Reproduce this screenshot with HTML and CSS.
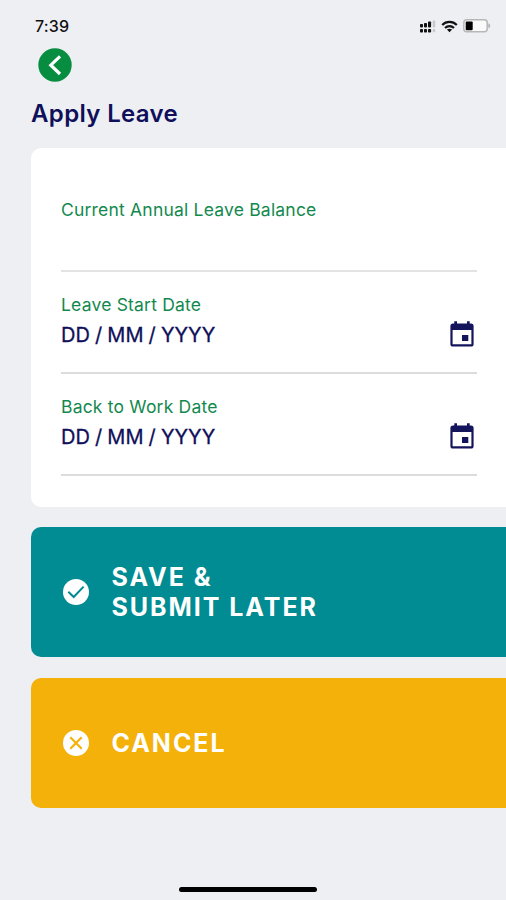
FILE: index.html
```html
<!DOCTYPE html>
<html lang="en">
<head>
  <meta charset="UTF-8" />
  <meta name="viewport" content="width=device-width, initial-scale=1.0"/>
  <title>Apply Leave</title>
  <link rel="stylesheet" href="styles.css">
</head>
<body>

  <div class="status-bar">
    <span class="time">7:39</span>
    <div class="status-icons">
      <svg class="signal" width="16" height="13" viewBox="0 0 16 13">
        <g fill="#111">
          <rect x="0" y="4" width="3" height="3.4" rx=".8"/>
          <rect x="4" y="3" width="3" height="4.4" rx=".8"/>
          <rect x="8" y="1.5" width="3.1" height="5.9" rx=".8"/>
          <rect x="0" y="9" width="3" height="3.5" rx=".8"/>
          <rect x="4" y="9" width="3" height="3.5" rx=".8"/>
          <rect x="8" y="9" width="3.1" height="3.5" rx=".8"/>
        </g>
        <g fill="#c6c7ca">
          <rect x="12.8" y="0.5" width="2.4" height="7" rx=".8"/>
          <rect x="12.8" y="9" width="2.4" height="3.2" rx=".8"/>
        </g>
      </svg>
      <svg class="wifi" width="17" height="13" viewBox="0 0 17 13">
        <g fill="none" stroke="#111" stroke-width="2.1">
          <path d="M1.2 5C5.2 .8 11.8 .8 15.8 5"/>
          <path d="M4 8C6.5 5.5 10.5 5.5 13 8"/>
        </g>
        <path d="M8.5 12.2L5.9 9.6C7.3 8.3 9.7 8.3 11.1 9.6Z" fill="#111"/>
      </svg>
      <svg class="battery" width="28" height="14" viewBox="0 0 28 14">
        <rect x=".8" y=".8" width="23.4" height="12" rx="3" fill="#fafafa" stroke="#b7b7ba" stroke-width="1.5"/>
        <rect x="2.7" y="2.4" width="7" height="8.8" rx="1" fill="#000"/>
        <path d="M25.4 4.3C27.8 5 27.8 8.6 25.4 9.3Z" fill="#b0b0b3"/>
      </svg>
    </div>
  </div>

  <header>
    <a class="back" aria-label="Back">
      <svg width="34" height="34" viewBox="0 0 34 34">
        <circle cx="17" cy="17" r="16.7" fill="#068d40"/>
        <path d="M22 8.4L12.8 17.2L22 26" fill="none" stroke="#fff" stroke-width="3.2"/>
      </svg>
    </a>
    <h1>Apply Leave</h1>
  </header>

  <form class="form-box">
    <div class="field balance">
      <span class="label">Current Annual Leave Balance</span>
    </div>

    <div class="field">
      <div>
        <span class="label">Leave Start Date</span>
        <span class="value">DD / MM / YYYY</span>
      </div>
      <svg class="calendar" width="24" height="26" viewBox="0 0 24 26">
        <path d="M3 2.5H21A2.6 2.6 0 0 1 23.6 5.1V22.9A2.6 2.6 0 0 1 21 25.5H3A2.6 2.6 0 0 1 .4 22.9V5.1A2.6 2.6 0 0 1 3 2.5ZM2.6 9V23.3H21.4V9Z" fill="#14145c" fill-rule="evenodd"/>
        <path d="M4.3 .3H7V4H4.3ZM17 .3H19.7V4H17ZM12 14H18.3V20H12Z" fill="#14145c"/>
      </svg>
    </div>

    <div class="field">
      <div>
        <span class="label">Back to Work Date</span>
        <span class="value">DD / MM / YYYY</span>
      </div>
      <svg class="calendar" width="24" height="26" viewBox="0 0 24 26">
        <path d="M3 2.5H21A2.6 2.6 0 0 1 23.6 5.1V22.9A2.6 2.6 0 0 1 21 25.5H3A2.6 2.6 0 0 1 .4 22.9V5.1A2.6 2.6 0 0 1 3 2.5ZM2.6 9V23.3H21.4V9Z" fill="#14145c" fill-rule="evenodd"/>
        <path d="M4.3 .3H7V4H4.3ZM17 .3H19.7V4H17ZM12 14H18.3V20H12Z" fill="#14145c"/>
      </svg>
    </div>
  </form>

  <button type="button" class="btn save">
    <svg width="26" height="26" viewBox="0 0 26 26">
      <circle cx="13" cy="13" r="13" fill="#fff"/>
      <path d="M5.3 12.8L10.7 18L20.6 7.6" fill="none" stroke="#008c92" stroke-width="2"/>
    </svg>
    <span>SAVE &amp;<br>SUBMIT LATER</span>
  </button>

  <button type="button" class="btn cancel">
    <svg width="26" height="26" viewBox="0 0 26 26">
      <circle cx="13" cy="13" r="13" fill="#fff"/>
      <path d="M7.3 7.3L18.7 18.7M18.7 7.3L7.3 18.7" fill="none" stroke="#f4b10a" stroke-width="2.2"/>
    </svg>
    <span>CANCEL</span>
  </button>

  <div class="home-bar"></div>

</body>
</html>
```
FILE: styles.css
```css
* {
  margin: 0; padding: 0; box-sizing: border-box;
  font-family: 'Inter', sans-serif;
}
body {
  height: 900px;
  padding-left: 30.5px;
  background: #edeff3;
  color: #0f0f5a;
  overflow: hidden;
  display: flex;
  flex-direction: column;
}
.status-bar {
  display: flex;
  justify-content: space-between;
  align-items: center;
  height: 20px;
  margin-top: 16px;
  padding: 0 15px 0 4.5px;
}
.time {
  font-size: 16px;
  font-weight: 500;
  letter-spacing: 0.2px;
  color: #111;
}
.status-icons {
  display: flex;
  align-items: center;
  gap: 6px;
}
.signal {
  margin-right: -1px;
}
.battery {
  margin-left: -1px;
}
.back {
  display: block;
  width: 34px;
  height: 34px;
  margin: 12px 0 0 7px;
}
.back svg {
  display: block;
}
header h1 {
  margin: 17px 0 0 0.5px;
  font-size: 24px;
  line-height: 30px;
  font-weight: 600;
  letter-spacing: 0.35px;
}
.form-box {
  height: 358.5px;
  margin-top: 19px;
  padding: 22px 29px 0 30.5px;
  background: #fff;
  border-radius: 10px 0 0 10px;
}
.field {
  display: flex;
  justify-content: space-between;
  align-items: flex-end;
  height: 102px;
  padding-bottom: 24px;
  border-bottom: 2px solid #dcdcde;
}
.balance {
  align-items: flex-start;
  height: 102px;
  padding-top: 29px;
  border-bottom-color: #e3e3e4;
}
.label {
  display: block;
  font-size: 17.5px;
  line-height: 22px;
  letter-spacing: 0.2px;
  color: #12894e;
}
.value {
  display: block;
  margin-top: 6px;
  font-size: 20px;
  line-height: 26px;
  word-spacing: -0.5px;
  -webkit-text-stroke: 0.3px #0f0f5a;
}
.calendar {
  margin: 0 3px 1px 0;
}
.btn {
  display: flex;
  align-items: center;
  gap: 23px;
  height: 130px;
  margin-top: 20.5px;
  padding-left: 32px;
  border: none;
  border-radius: 10px 0 0 10px;
  color: #fff;
  font-size: 25px;
  font-weight: 700;
  line-height: 30px;
  letter-spacing: 1.95px;
  text-align: left;
}
.save {
  background: #008c92;
}
.cancel {
  background: #f4b10a;
}
.home-bar {
  width: 138px;
  height: 5px;
  margin: auto 0 8px 148.5px;
  border-radius: 3px;
  background: #000;
}
```
